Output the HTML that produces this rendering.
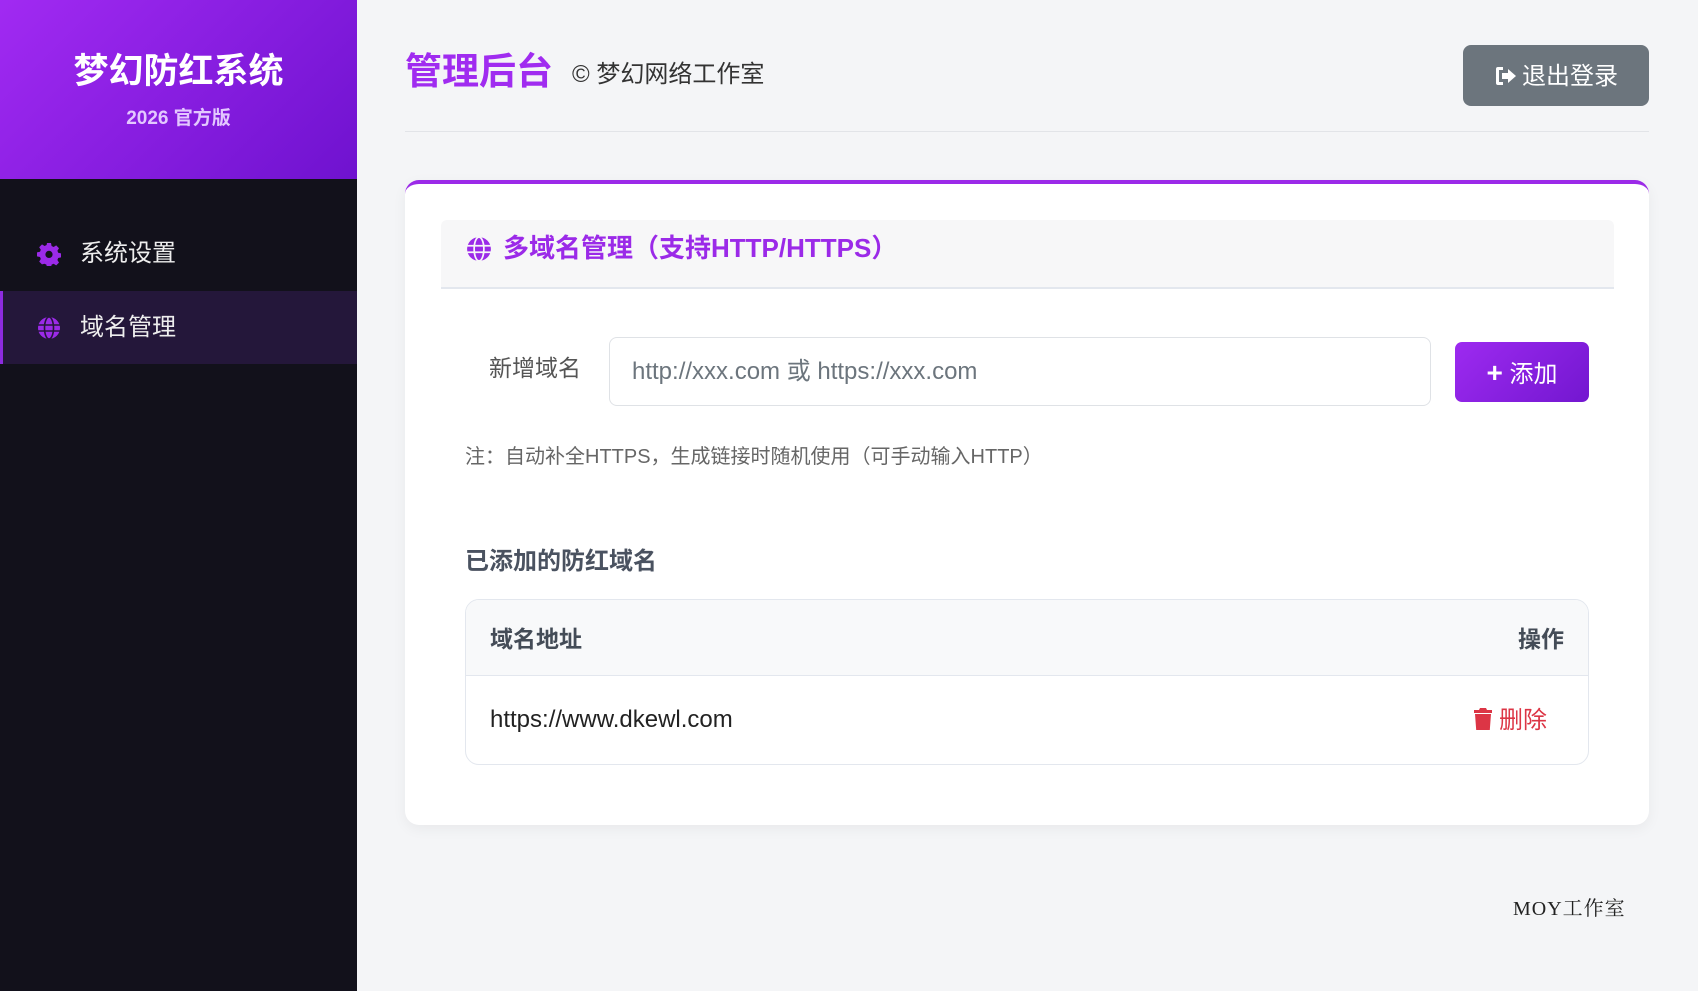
<!DOCTYPE html>
<html><head><meta charset="utf-8"><style>
*{box-sizing:border-box;margin:0;padding:0}
body{width:1698px;height:991px;background:#f4f5f7;font-family:"Liberation Sans","Noto Sans CJK SC",sans-serif;position:relative;overflow:hidden}
.abs{position:absolute}
.side{left:0;top:0;width:357px;height:991px;background:#12111b}
.brand{left:0;top:0;width:357px;height:179px;background:linear-gradient(135deg,#a12af2,#6f12cf)}
.t1{left:0;width:357px;top:50px;text-align:center;color:#fff;font-size:35px;font-weight:bold;line-height:44px}
.t2{left:0;width:357px;top:106px;text-align:center;color:#e3c8ff;font-size:19px;font-weight:bold;line-height:26px}
.mi{left:0;width:357px;height:73px;color:#eee;font-size:24px;line-height:73px;padding-left:80px}
.mi svg{position:absolute;left:37px;top:25px}
.act{background:#24173a;border-left:3px solid #8d2be0;padding-left:77px}
.h1{left:405px;top:49px;font-size:37px;font-weight:bold;color:#a02cf0;line-height:46px}
.cp{left:572px;top:59px;font-size:24px;color:#333;line-height:32px}
.logout{left:1463px;top:45px;width:186px;height:61px;background:#6c757d;border-radius:8px;color:#fff;font-size:24px;line-height:63px;text-align:center}
.hr{left:405px;top:131px;width:1244px;height:1px;background:#e2e4e8}
.card{left:405px;top:180px;width:1244px;height:645px;background:#fff;border-radius:14px;border-top:4px solid #9b2ae8;box-shadow:0 4px 14px rgba(0,0,0,.05)}
.ch{left:441px;top:220px;width:1173px;height:69px;background:#f7f7f8;border-bottom:2px solid #e3e7ee;border-radius:6px 6px 0 0}
.cht{left:503px;top:228px;font-size:26px;font-weight:bold;color:#9b2ae8;line-height:40px}
.lab{left:489px;top:352px;font-size:23px;color:#555;line-height:32px}
.inp{left:609px;top:337px;width:822px;height:69px;border:1px solid #dfe2e6;border-radius:8px;font-size:24px;color:#6c757d;line-height:67px;padding-left:22px}
.add{left:1455px;top:342px;width:134px;height:60px;border-radius:7px;background:linear-gradient(135deg,#9d2af0,#7317d0);color:#fff;font-size:24px;line-height:62px;text-align:center}
.note{left:465px;top:444px;font-size:20px;color:#666;line-height:26px}
.sub{left:465px;top:546px;font-size:24px;font-weight:bold;color:#4a5260;line-height:32px}
.tbl{left:465px;top:599px;width:1124px;height:166px;border:1px solid #e3e7ee;border-radius:14px;overflow:hidden}
.th{left:0;top:0;width:100%;height:76px;background:#f8f9fa;border-bottom:1px solid #e3e7ee}
.thl{left:24px;top:23px;font-size:23px;font-weight:bold;color:#444c57;line-height:32px}
.thr{right:24px;top:23px;font-size:23px;font-weight:bold;color:#444c57;line-height:32px}
.td{left:24px;top:104px;font-size:24px;color:#222;line-height:32px}
.del{left:1007px;top:105px;font-size:24px;color:#dc3545;line-height:32px}
.foot{left:1513px;top:892px;font-family:"Liberation Serif","Noto Serif CJK SC",serif;font-size:20px;color:#222;letter-spacing:1px}
</style></head><body>
<div class="abs side"></div>
<div class="abs brand"></div>
<div class="abs t1">梦幻防红系统</div>
<div class="abs t2">2026 官方版</div>
<div class="abs mi" style="top:217px"><svg width="24" height="24" viewBox="0 0 24 24"><path fill="#9b2ae8" d="M10 1h4l.6 3 2 1 2.6-1.6 2.8 2.8L20.4 8.8l.8 2 2.8.6v4l-2.8.6-.8 2 1.6 2.6-2.8 2.8-2.6-1.6-2 .8-.6 3h-4l-.6-3-2-.8L5 22.4 2.2 19.6 3.8 17l-.8-2L0 14.4v-4l3-.6.8-2L2.2 5.2 5 2.4 7.6 4l2-1z"/><circle cx="12" cy="12.4" r="3.6" fill="#12111b"/></svg>系统设置</div>
<div class="abs mi act" style="top:291px"><svg width="24" height="24" viewBox="0 0 24 24" style="left:34px"><circle cx="12" cy="12" r="11" fill="#9b2ae8"/><g stroke="#24173a" stroke-width="1.6" fill="none"><path d="M1 9h22M1 15h22"/><ellipse cx="12" cy="12" rx="4.5" ry="11"/></g></svg>域名管理</div>

<div class="abs h1">管理后台</div>
<div class="abs cp">© 梦幻网络工作室</div>
<div class="abs logout"><svg width="24" height="24" viewBox="0 0 24 24" style="vertical-align:-4px;margin-right:4px"><path fill="#fff" d="M9 3H4a2 2 0 0 0-2 2v14a2 2 0 0 0 2 2h5v-3H5V6h4z"/><path fill="#fff" d="M14 5l8 7-8 7v-4H8V9h6z"/></svg>退出登录</div>
<div class="abs hr"></div>

<div class="abs card"></div>
<div class="abs ch"></div>
<svg class="abs" style="left:466px;top:236px" width="26" height="26" viewBox="0 0 24 24"><circle cx="12" cy="12" r="11" fill="#9b2ae8"/><g stroke="#f7f7f8" stroke-width="1.6" fill="none"><path d="M1 9h22M1 15h22"/><ellipse cx="12" cy="12" rx="4.5" ry="11"/></g></svg>
<div class="abs cht">多域名管理（支持HTTP/HTTPS）</div>
<div class="abs lab">新增域名</div>
<div class="abs inp">http://xxx.com 或 https://xxx.com</div>
<div class="abs add"><b style="font-size:28px">+</b> 添加</div>
<div class="abs note">注：自动补全HTTPS，生成链接时随机使用（可手动输入HTTP）</div>
<div class="abs sub">已添加的防红域名</div>
<div class="abs tbl">
<div class="abs th"></div>
<div class="abs thl">域名地址</div>
<div class="abs thr">操作</div>
<div class="abs td">https://www.dkewl.com</div>
<div class="abs del"><svg width="20" height="24" viewBox="0 0 20 24" style="vertical-align:-3px;margin-right:6px"><path fill="#dc3545" d="M7 1h6l1 2h5v3H1V3h5zM2 7h16l-1.2 16H3.2z"/></svg>删除</div>
</div>
<div class="abs foot">MOY工作室</div>
</body></html>
